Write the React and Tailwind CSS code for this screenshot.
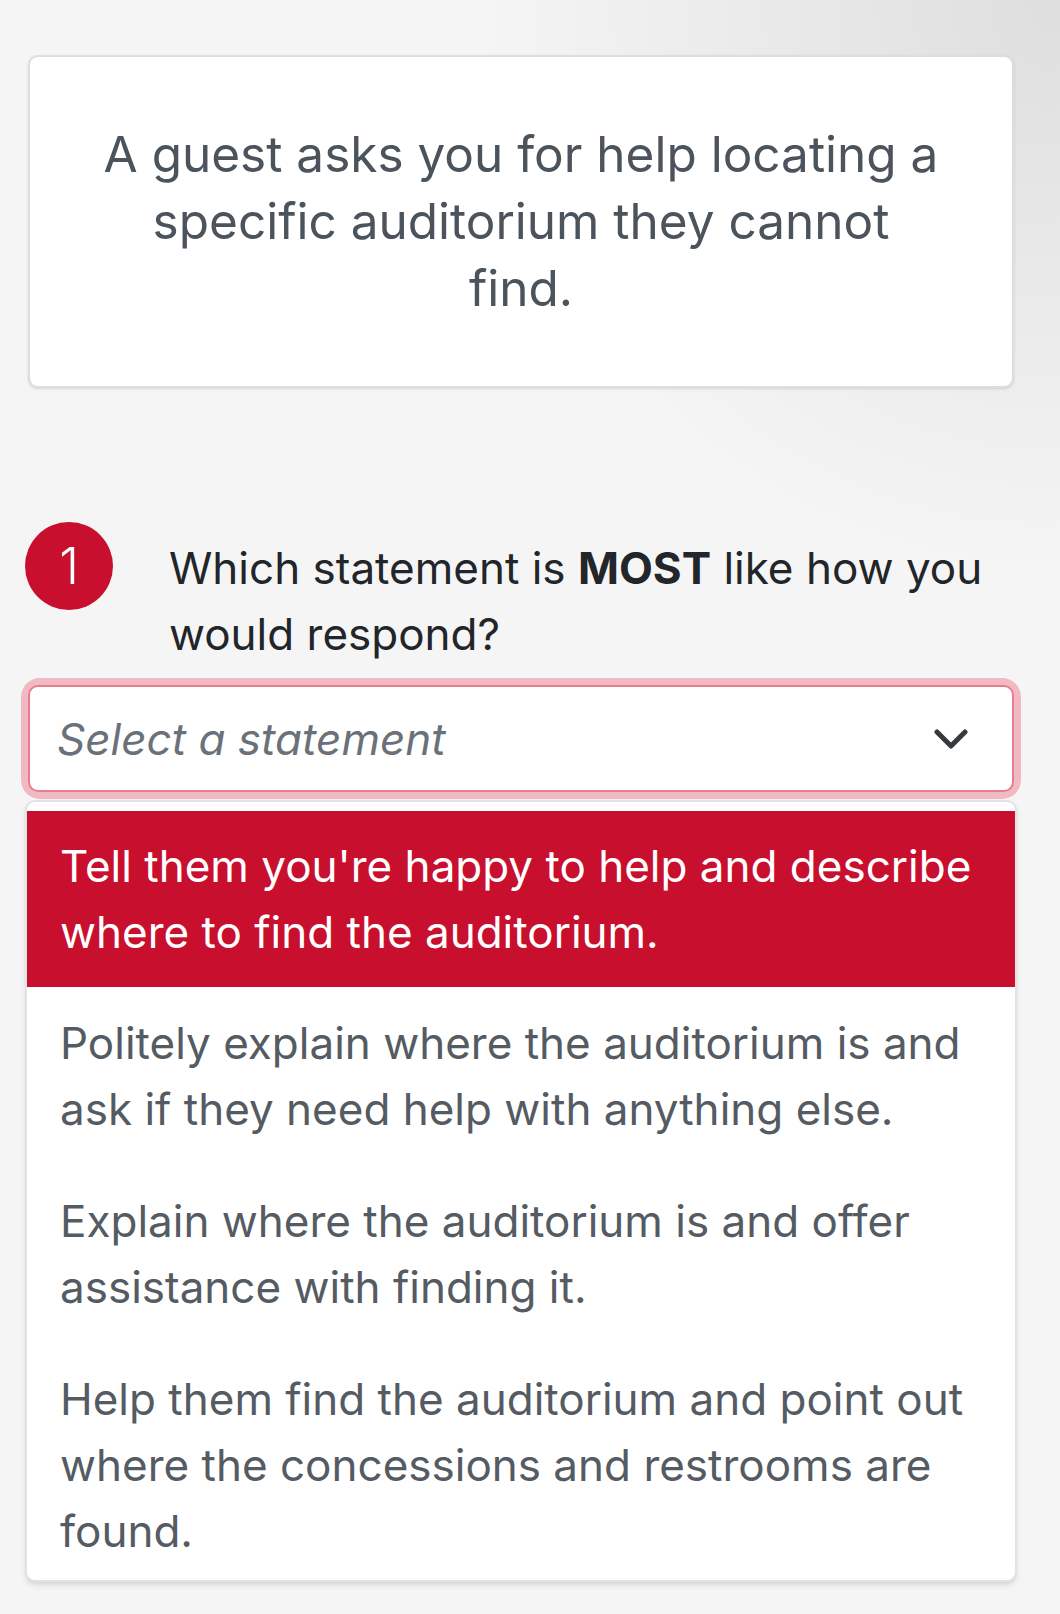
import React from 'react';

const OPTIONS = [
  "Tell them you're happy to help and describe where to find the auditorium.",
  'Politely explain where the auditorium is and ask if they need help with anything else.',
  'Explain where the auditorium is and offer assistance with finding it.',
  'Help them find the auditorium and point out where the concessions and restrooms are found.',
];

export default function App() {
  const active = 0;

  return (
    <div className="min-h-[1614px] w-[1060px] bg-[#f5f5f5] bg-[radial-gradient(circle_at_100%_0%,#dedede_0%,#f5f5f5_30%)] font-['Inter',sans-serif] pt-[55px] pb-[32px]">
      <div className="ml-[28px] w-[986px]">
        {/* Scenario card */}
        <div className="bg-white border-2 border-[#dedede] rounded-[10px] shadow-sm px-[66px] py-[64px] text-center text-[49.5px] leading-[67px] text-[#4b535c]">
          A guest asks you for help locating a specific auditorium they cannot find.
        </div>

        {/* Question */}
        <div className="mt-[134px] flex items-start">
          <div className="shrink-0 w-[88px] h-[88px] -ml-[3px] rounded-full bg-[#c90f2e] flex items-center justify-center text-white text-[50px] font-light">
            1
          </div>
          <p className="ml-[56px] mt-[13px] text-[44px] leading-[66px] text-[#222529]">
            Which statement is <span className="font-bold">MOST</span> like how you would respond?
          </p>
        </div>

        {/* Select */}
        <div className="mt-[18px] rounded-[12px] ring-[7px] ring-[#f2b9c2]">
          <div className="h-[107px] bg-white border-2 border-[#e87d8b] rounded-[10px] flex items-center justify-between pl-[27px] pr-[44px]">
            <span className="italic text-[44px] text-[#6b7178]">Select a statement</span>
            <svg width="34" height="22" viewBox="0 0 34 22" fill="none">
              <path d="M3 4 L17 18 L31 4" stroke="#343a40" strokeWidth="5" strokeLinecap="round" strokeLinejoin="round" />
            </svg>
          </div>
        </div>

        <div className="mt-[8px] -mx-[3px] h-[782px] bg-white border-2 border-[#e3e3e3] rounded-[10px] shadow-md pt-[9px] overflow-hidden">
          {OPTIONS.map((opt, i) => (
            <div
              key={i}
              className={
                i === active
                  ? 'bg-[#c90f2e] text-white px-[33px] py-[22px] text-[44px] leading-[66px]'
                  : 'text-[#555b62] px-[33px] py-[23px] text-[44px] leading-[66px]'
              }
            >
              {opt}
            </div>
          ))}
        </div>
      </div>
    </div>
  );
}
